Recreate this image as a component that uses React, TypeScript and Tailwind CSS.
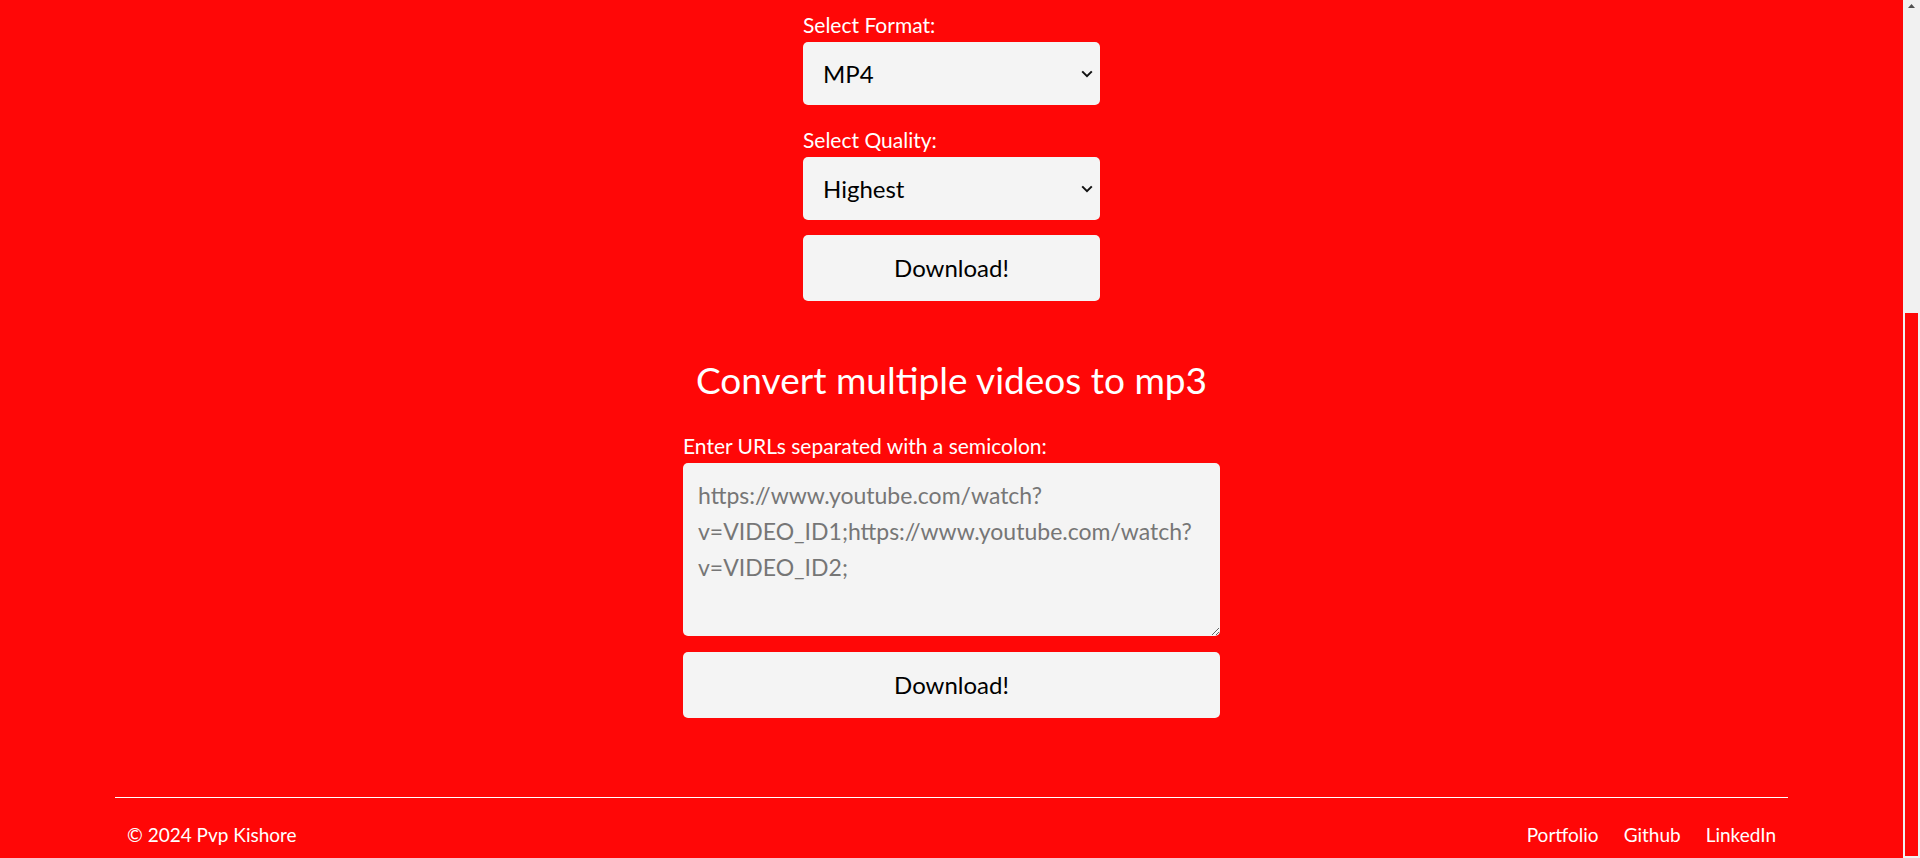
import { useState } from "react";

const PLACEHOLDER =
  "https://www.youtube.com/watch?\nv=VIDEO_ID1;https://www.youtube.com/watch?\nv=VIDEO_ID2;";

function Chevron() {
  return (
    <svg
      className="pointer-events-none absolute right-[7px] top-1/2 -translate-y-1/2"
      width="12"
      height="8"
      viewBox="0 0 12 8"
      fill="none"
    >
      <path d="M1.2 1.4 6 6.2l4.8-4.8" stroke="#111" strokeWidth="2" />
    </svg>
  );
}

function Select({ value, options, onChange }: { value: string; options: string[]; onChange: (v: string) => void }) {
  return (
    <div className="relative mt-[5px]">
      <select
        value={value}
        onChange={(e) => onChange(e.target.value)}
        className="h-[63px] w-full appearance-none rounded-[5px] bg-[#f4f4f4] pl-[20px] text-[24px] text-black outline-none"
      >
        {options.map((o) => (
          <option key={o}>{o}</option>
        ))}
      </select>
      <Chevron />
    </div>
  );
}

export default function App() {
  const [format, setFormat] = useState("MP4");
  const [quality, setQuality] = useState("Highest");
  const [urls, setUrls] = useState("");

  return (
    <div className="flex h-[858px] w-full overflow-hidden bg-[#ff0707] font-['Lato','Noto_Sans',sans-serif]">
      <main className="flex flex-1 flex-col">
        <section className="flex flex-col items-center">
          <form className="flex w-[297px] flex-col pt-[13px]" onSubmit={(e) => e.preventDefault()}>
            <label className="text-[21px] leading-[24px] text-white">Select Format:</label>
            <Select value={format} options={["MP4", "MP3", "WEBM"]} onChange={setFormat} />
            <label className="mt-[23px] text-[21px] leading-[24px] text-white">Select Quality:</label>
            <Select value={quality} options={["Highest", "Lowest"]} onChange={setQuality} />
            <button className="mt-[15px] h-[66px] rounded-[5px] bg-[#f4f4f4] text-[24px] text-black">
              Download!
            </button>
          </form>

          <h2 className="mt-[57px] text-[37px] leading-[44px] text-white">Convert multiple videos to mp3</h2>

          <form className="mt-[32px] flex w-[537px] flex-col" onSubmit={(e) => e.preventDefault()}>
            <label className="text-[21px] leading-[24px] text-white">
              Enter URLs separated with a semicolon:
            </label>
            <textarea
              value={urls}
              onChange={(e) => setUrls(e.target.value)}
              placeholder={PLACEHOLDER}
              className="mt-[5px] h-[173px] w-full rounded-[5px] bg-[#f4f4f4] px-[15px] pt-[14px] text-[23px] leading-[36px] text-black outline-none placeholder:text-[#767676]"
            />
            <button className="mt-[16px] h-[66px] rounded-[5px] bg-[#f4f4f4] text-[24px] text-black">
              Download!
            </button>
          </form>
        </section>

        <footer className="mx-[115px] mt-[79px] border-t border-white">
          <div className="flex items-center justify-between px-3 pt-[25px] text-[19px] leading-[24px] text-white">
            <p>© 2024 Pvp Kishore</p>
            <nav className="flex gap-[25px]">
              <a href="#">Portfolio</a>
              <a href="#">Github</a>
              <a href="#">LinkedIn</a>
            </nav>
          </div>
        </footer>
      </main>

      {/* fake scrollbar, page is shown scrolled to the bottom */}
      <div className="flex w-[17px] flex-col items-center bg-[#f1f1f1]">
        <svg className="mt-[4px]" width="7" height="4" viewBox="0 0 7 4">
          <path d="M3.5 0 7 4H0z" fill="#505050" />
        </svg>
        <div className="mt-auto mb-[2px] h-[543px] w-[13px] bg-[#ff0707]" />
      </div>
    </div>
  );
}
